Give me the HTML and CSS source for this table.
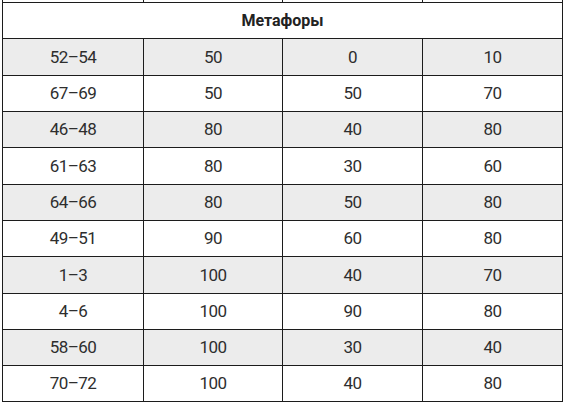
FILE: index.html
```html
<!DOCTYPE html>
<html lang="ru">
<head>
<meta charset="utf-8">
<title>Метафоры</title>
<link rel="stylesheet" href="styles.css">
</head>
<body>
<div class="wrap">
<table class="grid">
<colgroup><col class="c1"><col class="c2"><col class="c3"><col class="c4"></colgroup>
<tr class="stub"><td></td><td></td><td></td><td></td></tr>
<tr class="head"><th colspan="4">Метафоры</th></tr>
<tr class="alt tall"><td>52–54</td><td>50</td><td>0</td><td>10</td></tr>
<tr><td>67–69</td><td>50</td><td>50</td><td>70</td></tr>
<tr class="alt"><td>46–48</td><td>80</td><td>40</td><td>80</td></tr>
<tr class="tall"><td>61–63</td><td>80</td><td>30</td><td>60</td></tr>
<tr class="alt"><td>64–66</td><td>80</td><td>50</td><td>80</td></tr>
<tr><td>49–51</td><td>90</td><td>60</td><td>80</td></tr>
<tr class="alt tall"><td>1–3</td><td>100</td><td>40</td><td>70</td></tr>
<tr><td>4–6</td><td>100</td><td>90</td><td>80</td></tr>
<tr class="alt"><td>58–60</td><td>100</td><td>30</td><td>40</td></tr>
<tr><td>70–72</td><td>100</td><td>40</td><td>80</td></tr>
</table>
</div>
</body>
</html>
```
FILE: styles.css
```css
html, body {
  margin: 0;
  padding: 0;
  background: #ffffff;
}
.wrap {
  padding: 0 0 0 2px;
}
.grid {
  border-collapse: collapse;
  table-layout: fixed;
  width: 561px;
  font-family: Roboto, "Liberation Sans", sans-serif;
  color: #2e2e2e;
}
.c1 { width: 141px; }
.c2 { width: 139px; }
.c3 { width: 140px; }
.c4 { width: 140px; }
.grid td, .grid th {
  border: 1px solid #1c1c1c;
  padding: 0;
  text-align: center;
  vertical-align: middle;
}
.grid tr {
  height: 36px;
}
.grid tr.tall {
  height: 37px;
}
.grid td {
  font-size: 17px;
  font-weight: 400;
  letter-spacing: -0.6px;
}
.grid tr.stub {
  height: 2px;
}
.stub td {
  border-top: none;
  font-size: 0;
  line-height: 0;
}
.grid tr.head {
  height: 36px;
}
.head th {
  font-size: 16px;
  font-weight: 700;
  color: #222222;
}
.alt td {
  background: #ececec;
}
```
